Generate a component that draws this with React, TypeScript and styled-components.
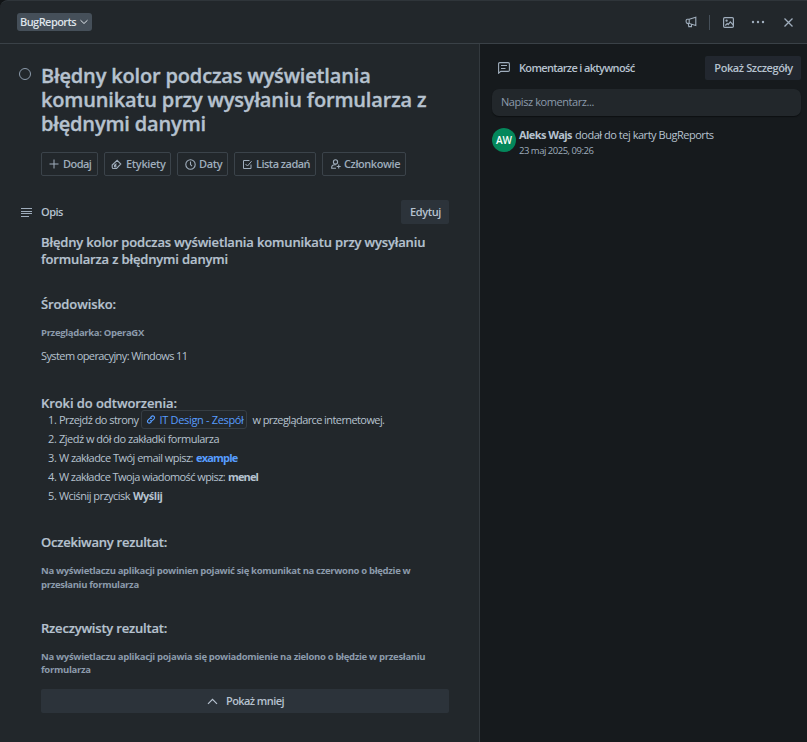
import React from "react";
import styled, { createGlobalStyle } from "styled-components";

const GlobalStyle = createGlobalStyle`
  *, *::before, *::after { box-sizing: border-box; }
  body {
    margin: 0;
    background: #111416;
    color: #b6c2cf;
    font: 400 11px/16px "Open Sans", "Noto Sans", sans-serif;
  }
  h1, h2, h3, h4, p, ol { margin: 0; padding: 0; }
`;

const Dialog = styled.div`
  display: flex;
  flex-direction: column;
  width: 807px;
  height: 742px;
  overflow: hidden;
  background: #22272b;
  border-top: 1px solid #2f353a;
  border-radius: 8px 0 0 0;
`;

const Header = styled.header`
  display: flex;
  align-items: center;
  justify-content: space-between;
  flex: none;
  height: 43px;
  padding: 0 13px 0 17px;
  border-bottom: 1px solid #3a4147;
`;

const ListChip = styled.button`
  display: flex;
  align-items: center;
  gap: 4px;
  width: 75px;
  height: 18px;
  padding: 0 0 0 3px;
  border: 0;
  border-radius: 3px;
  background: #454f59;
  color: #dee4ea;
  font: inherit;
  font-weight: 600;
`;

const HeaderActions = styled.div`
  display: flex;
  align-items: center;
  color: #9fadbc;
`;

const HeaderDivider = styled.span`
  width: 1px;
  height: 15px;
  margin: 0 13px 0 11px;
  background: #454f59;
`;

const Gap = styled.span<{ $w: number }>`
  width: ${(p) => p.$w}px;
`;

const Columns = styled.div`
  display: flex;
  flex: 1;
  min-height: 0;
`;

const Main = styled.main`
  width: 480px;
  padding: 20px 30px 0 18px;
  border-right: 1px solid #33393e;
`;

const Aside = styled.aside`
  flex: 1;
  padding: 12px 6px 0 12px;
  background: #161a1d;
`;

const Text = styled.span<{ $ls?: number; $w?: number }>`
  white-space: pre;
  letter-spacing: ${(p) => p.$ls ?? 0}px;
  ${(p) => p.$w && `font-weight: ${p.$w};`}
`;

const TitleRow = styled.div`
  display: flex;
`;

const TitleMark = styled.div`
  width: 23px;
  padding-top: 3px;
`;

const Title = styled.h1`
  font-size: 20px;
  font-weight: 600;
  line-height: 24px;
  -webkit-text-stroke: 0.35px currentColor;
`;

const Actions = styled.div`
  display: flex;
  gap: 6px;
  margin: 16px 0 24px 23px;
`;

const ActionButton = styled.button<{ $width: number; $pad: number; $gap: number }>`
  display: flex;
  align-items: center;
  gap: ${(p) => p.$gap}px;
  width: ${(p) => p.$width}px;
  height: 24px;
  padding: 0 0 0 ${(p) => p.$pad}px;
  border: 1px solid #3b434a;
  border-radius: 2px;
  background: transparent;
  color: #9fadbc;
  font: inherit;
  font-weight: 600;
`;

const SectionHead = styled.div`
  display: flex;
  align-items: center;
  height: 24px;
`;

const SectionIcon = styled.span<{ $w: number; $pad: number }>`
  display: flex;
  width: ${(p) => p.$w}px;
  padding-left: ${(p) => p.$pad}px;
  color: #9fadbc;
`;

const SectionTitle = styled.h2`
  flex: 1;
  font-size: 11px;
  font-weight: 600;
  line-height: 16px;
`;

const SolidButton = styled.button<{ $width: number; $tone: string }>`
  display: flex;
  align-items: center;
  justify-content: center;
  gap: 8px;
  width: ${(p) => p.$width}px;
  height: 24px;
  padding: 0 0 0 1px;
  border: 0;
  border-radius: 2px;
  background: ${(p) => p.$tone};
  color: #b6c2cf;
  font: inherit;
  font-weight: 600;
`;

const Description = styled.article`
  display: flex;
  flex-direction: column;
  padding: 10px 0 0 23px;
`;

const Heading = styled.h3<{ $top?: number }>`
  margin-top: ${(p) => p.$top ?? 0}px;
  font-size: 13px;
  font-weight: 600;
  line-height: 17px;
  -webkit-text-stroke: 0.2px currentColor;
`;

const Fine = styled.h4<{ $top: number; $lh: number }>`
  margin-top: ${(p) => p.$top}px;
  color: #8c9bab;
  font-size: 9.5px;
  font-weight: 700;
  line-height: ${(p) => p.$lh}px;
`;

const Paragraph = styled.p`
  margin-top: 8px;
`;

const Steps = styled.ol`
  margin-top: -2px;
  list-style: none;
`;

const Step = styled.li`
  display: flex;
  align-items: center;
  height: 19px;
`;

const StepNumber = styled.span`
  width: 18px;
  padding-left: 7px;
  letter-spacing: -0.4px;
`;

const SmartLink = styled.a`
  display: flex;
  align-items: center;
  width: 106px;
  height: 19px;
  margin: 0 6px 0 2px;
  padding-left: 4px;
  gap: 4px;
  border: 1px solid #363d43;
  border-radius: 3px;
  color: #579dff;
`;

const Strong = styled.strong<{ $ls: number; $link?: boolean }>`
  margin-left: 3px;
  font-weight: 700;
  letter-spacing: ${(p) => p.$ls}px;
  color: ${(p) => (p.$link ? "#579dff" : "inherit")};
`;

const MoreWrap = styled.div`
  margin-top: 13px;
`;

const CommentBox = styled.div`
  display: flex;
  align-items: center;
  height: 27px;
  margin-top: 9px;
  padding: 0 0 1px 9px;
  border-radius: 7px;
  background: #22272b;
  box-shadow: 0 1px 1px #0d1012;
  color: #8c9bab;
`;

const Activity = styled.div`
  display: flex;
  gap: 3px;
  margin-top: 12px;
`;

const Avatar = styled.div`
  display: flex;
  align-items: center;
  justify-content: center;
  width: 24px;
  height: 24px;
  border-radius: 50%;
  background: #04875b;
  color: #fff;
  font-size: 10px;
  font-weight: 600;
`;

const ActivityBody = styled.div`
  display: flex;
  flex-direction: column;
`;

const ActivityLine = styled.div`
  display: flex;
  gap: 3px;
  height: 16px;
  margin-top: -1px;
`;

const Timestamp = styled.span`
  font-size: 9.5px;
  line-height: 15px;
  letter-spacing: -0.49px;
  color: #9fadbc;
`;

type IconProps = { w: number; h?: number; sw?: number; children: React.ReactNode };
const Icon = ({ w, h = w, sw = 1, children }: IconProps) => (
  <svg width={w} height={h} viewBox={`0 0 ${w} ${h}`} fill="none" stroke="currentColor" strokeWidth={sw}>
    {children}
  </svg>
);

const actions = [
  { label: "Dodaj", ls: -0.56, width: 57, pad: 7, gap: 4, icon: <Icon w={10}><path d="M5 .5v9M.5 5h9" /></Icon> },
  {
    label: "Etykiety", ls: -0.33, width: 67, pad: 6, gap: 4,
    icon: (
      <Icon w={11} sw={1.1}>
        <path d="M6.2 1.3 9.8 5 5.6 9.5H2.5c-.8 0-1.3-.6-1.3-1.3V6z" />
        <path d="M3.3 6.5 5.5 4.6" />
        <circle cx="4.2" cy="7.2" r=".8" />
      </Icon>
    ),
  },
  {
    label: "Daty", ls: -0.38, width: 51, pad: 7, gap: 3,
    icon: <Icon w={11} sw={1.1}><circle cx="5.5" cy="5.5" r="4.7" /><path d="M5.5 2.6v3l1.5 1.6" /></Icon>,
  },
  {
    label: "Lista zadań", ls: -0.53, width: 82, pad: 8, gap: 4,
    icon: <Icon w={9}><path d="M8 4.5v4H.5v-8h6" /><path d="m2.5 4 2 2L8.6 1.2" /></Icon>,
  },
  {
    label: "Członkowie", ls: -0.43, width: 84, pad: 8, gap: 3,
    icon: (
      <Icon w={10} sw={1.1}>
        <circle cx="4.5" cy="2.9" r="2.1" />
        <path d="M5 9.2H.7V8.4c0-1.6 1.2-2.7 3-2.7h1.4M7.7 5.5v4M5.7 7.5h4" />
      </Icon>
    ),
  },
];

export default function App() {
  return (
    <>
      <GlobalStyle />
      <Dialog>
        <Header>
          <ListChip>
            <Text $ls={-0.56}>BugReports</Text>
            <Icon w={8} h={6}><path d="m.5 1.2 3.5 3.3 3.5-3.3" /></Icon>
          </ListChip>
          <HeaderActions>
            <Icon w={13} h={12} sw={1.1}>
              <path d="M4.2 3.3 10.8 1.2v8.3L4.2 7.4zM4.2 3.3H2.3c-.8 0-1.2.6-1.2 2s.4 2.1 1.2 2.1h1.9M3.3 7.6l.5 3h2.7V8.4" />
            </Icon>
            <HeaderDivider />
            <Icon w={11} sw={1.2}>
              <rect x=".6" y=".6" width="9.8" height="9.8" rx="1.2" />
              <circle cx="3.6" cy="3.6" r=".6" />
              <path d="m2.3 8.5 1.9-2 1 1L7.3 4.8l3 3.2" />
            </Icon>
            <Gap $w={17} />
            <Icon w={14} h={4} sw={0}>
              <g fill="currentColor"><circle cx="2" cy="2" r="1.2" /><circle cx="7" cy="2" r="1.2" /><circle cx="12" cy="2" r="1.2" /></g>
            </Icon>
            <Gap $w={18} />
            <Icon w={11} sw={1.3}><path d="m1.5 1.5 8 8M9.5 1.5l-8 8" /></Icon>
          </HeaderActions>
        </Header>
        <Columns>
          <Main>
            <TitleRow>
              <TitleMark>
                <Icon w={14}><circle cx="7" cy="7" r="5.5" stroke="#8c9bab" /></Icon>
              </TitleMark>
              <Title>
                <Text $ls={-0.16}>{"Błędny kolor podczas wyświetlania\nkomunikatu przy wysyłaniu formularza z\nbłędnymi danymi"}</Text>
              </Title>
            </TitleRow>
            <Actions>
              {actions.map((a) => (
                <ActionButton key={a.label} $width={a.width} $pad={a.pad} $gap={a.gap}>
                  {a.icon}
                  <Text $ls={a.ls}>{a.label}</Text>
                </ActionButton>
              ))}
            </Actions>
            <SectionHead>
              <SectionIcon $w={23} $pad={3}>
                <Icon w={11} h={9}><path d="M0 .5h11M0 3.5h11M0 5.5h11M0 8.5h8" /></Icon>
              </SectionIcon>
              <SectionTitle><Text $ls={-0.5}>Opis</Text></SectionTitle>
              <SolidButton $width={48} $tone="#2c333a"><Text $ls={-0.42}>Edytuj</Text></SolidButton>
            </SectionHead>
            <Description>
              <Heading>
                <Text $ls={-0.15}>{"Błędny kolor podczas wyświetlania komunikatu przy wysyłaniu\nformularza z błędnymi danymi"}</Text>
              </Heading>
              <Heading $top={28}><Text $ls={-0.11}>Środowisko:</Text></Heading>
              <Fine $top={13} $lh={14}><Text $ls={-0.33}>Przeglądarka: OperaGX</Text></Fine>
              <Paragraph><Text $ls={-0.6}>System operacyjny: Windows 11</Text></Paragraph>
              <Heading $top={31}><Text $ls={-0.08}>Kroki do odtworzenia:</Text></Heading>
              <Steps>
                <Step>
                  <StepNumber>1.</StepNumber>
                  <Text $ls={-0.54}>Przejdź do strony</Text>
                  <SmartLink>
                    <Icon w={10} h={9} sw={1.1}>
                      <path d="M4.3 2.7 5.5 1.5c1.7-1.6 4 .6 2.5 2.4L6.5 5.4c-.8.7-1.7.6-2.3 0M5.7 6.3 4.5 7.5C2.8 9.1.5 6.9 2 5.1L3.5 3.6c.8-.7 1.7-.6 2.3 0" />
                    </Icon>
                    <Text $ls={-0.33}>IT Design - Zespół</Text>
                  </SmartLink>
                  <Text $ls={-0.59}>w przeglądarce internetowej.</Text>
                </Step>
                <Step>
                  <StepNumber>2.</StepNumber>
                  <Text $ls={-0.5}>Zjedź w dół do zakładki formularza</Text>
                </Step>
                <Step>
                  <StepNumber>3.</StepNumber>
                  <Text $ls={-0.54}>W zakładce Twój email wpisz:</Text>
                  <Strong $ls={-0.78} $link>example</Strong>
                </Step>
                <Step>
                  <StepNumber>4.</StepNumber>
                  <Text $ls={-0.58}>W zakładce Twoja wiadomość wpisz:</Text>
                  <Strong $ls={-0.88}>menel</Strong>
                </Step>
                <Step>
                  <StepNumber>5.</StepNumber>
                  <Text $ls={-0.54}>Wciśnij przycisk</Text>
                  <Strong $ls={-0.49}>Wyślij</Strong>
                </Step>
              </Steps>
              <Heading $top={29}><Text $ls={-0.24}>Oczekiwany rezultat:</Text></Heading>
              <Fine $top={13} $lh={14}>
                <Text $ls={-0.32}>{"Na wyświetlaczu aplikacji powinien pojawić się komunikat na czerwono o błędzie w\nprzesłaniu formularza"}</Text>
              </Fine>
              <Heading $top={28}><Text $ls={-0.2}>Rzeczywisty rezultat:</Text></Heading>
              <Fine $top={13} $lh={13}>
                <Text $ls={-0.31}>{"Na wyświetlaczu aplikacji pojawia się powiadomienie na zielono o błędzie w przesłaniu\nformularza"}</Text>
              </Fine>
              <MoreWrap>
                <SolidButton $width={408} $tone="#2c333a">
                  <Icon w={11} h={7} sw={1.2}><path d="m1 5.8 4.5-4.5L10 5.8" /></Icon>
                  <Text $ls={-0.56}>Pokaż mniej</Text>
                </SolidButton>
              </MoreWrap>
            </Description>
          </Main>
          <Aside>
            <SectionHead>
              <SectionIcon $w={27} $pad={6}>
                <Icon w={12} sw={1.1}>
                  <path d="M.6 11.2V1.8C.6 1 1 .6 1.8.6h8.4c.8 0 1.2.4 1.2 1.2v6.4c0 .8-.4 1.2-1.2 1.2H2.8zM3 3.5h6M3 6.5h4.5" />
                </Icon>
              </SectionIcon>
              <SectionTitle><Text $ls={-0.65}>Komentarze i aktywność</Text></SectionTitle>
              <SolidButton $width={96} $tone="#22272f"><Text $ls={-0.4}>Pokaż Szczegóły</Text></SolidButton>
            </SectionHead>
            <CommentBox><Text $ls={-0.43}>Napisz komentarz...</Text></CommentBox>
            <Activity>
              <Avatar>AW</Avatar>
              <ActivityBody>
                <ActivityLine>
                  <Text $ls={-0.57} $w={700}>Aleks Wajs</Text>
                  <Text $ls={-0.47}>dodał do tej karty BugReports</Text>
                </ActivityLine>
                <Timestamp>23 maj 2025, 09:26</Timestamp>
              </ActivityBody>
            </Activity>
          </Aside>
        </Columns>
      </Dialog>
    </>
  );
}
